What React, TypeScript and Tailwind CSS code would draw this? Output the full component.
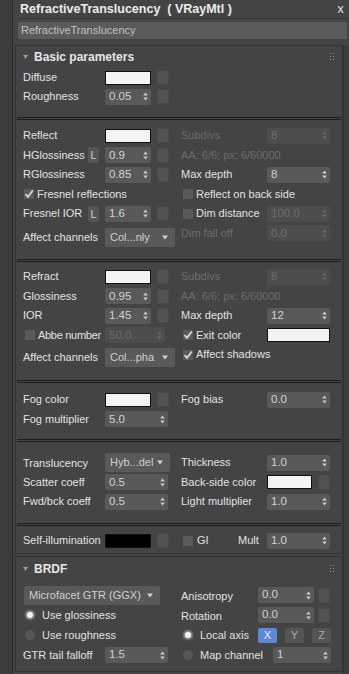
import React from "react";

const LBL = "text-[11px] leading-none text-[#e2e2e2] whitespace-nowrap";
const DIM = "text-[11px] leading-none text-[#6c6c6c] whitespace-nowrap";

function Arrows({ dim = false }: { dim?: boolean }) {
  return (
    <svg width="5" height="9" viewBox="0 0 5 9" className="shrink-0">
      <path d="M2.5 0.5L4.8 3.4H0.2Z M0.2 5.6H4.8L2.5 8.5Z" fill={dim ? "#686868" : "#cccccc"} />
    </svg>
  );
}

function Spinner({ value, w, dim = false }: { value: string; w: string; dim?: boolean }) {
  return (
    <div
      className={`${w} h-[16px] shrink-0 rounded-[2px] flex items-center justify-between pl-[4px] pr-[3px] text-[11.5px] leading-none whitespace-nowrap ${
        dim ? "bg-[#4d4d4d] text-[#6e6e6e]" : "bg-[#595959] text-[#d2d2d2]"
      }`}
    >
      <span>{value}</span>
      <Arrows dim={dim} />
    </div>
  );
}

function Tri() {
  return (
    <svg width="6" height="5" viewBox="0 0 6 5" className="shrink-0">
      <path d="M0 0.5H6L3 4.5Z" fill="#d0d0d0" />
    </svg>
  );
}

function Dropdown({ value, w }: { value: string; w: string }) {
  return (
    <div className={`${w} h-[19px] shrink-0 rounded-[2px] bg-[#595959] flex items-center justify-between pl-[5px] pr-[7px] text-[11px] leading-none text-[#cfcfcf] whitespace-nowrap`}>
      <span>{value}</span>
      <Tri />
    </div>
  );
}

function Swatch({ w, black = false }: { w: string; black?: boolean }) {
  return <div className={`${w} h-[14px] shrink-0 border border-[#111] ${black ? "bg-black" : "bg-[#f3f3f3]"}`} />;
}

function Sq() {
  return <div className="w-[12px] h-[15px] shrink-0 rounded-[2px] bg-[#525252] border border-[#4a4a4a]" />;
}

function LBtn() {
  return (
    <div className="w-[11px] h-[16px] shrink-0 rounded-[2px] bg-[#555] flex items-center justify-center text-[10.5px] leading-none text-[#cfcfcf]">
      L
    </div>
  );
}

function Check({ on = false }: { on?: boolean }) {
  return (
    <div className="w-[10px] h-[10px] shrink-0 bg-[#5a5a5a] flex items-center justify-center">
      {on && (
        <svg width="10" height="10" viewBox="0 0 10 10">
          <path d="M1.5 5.2L4 7.8L8.8 1.5" stroke="#d8d8d8" strokeWidth="1.8" fill="none" />
        </svg>
      )}
    </div>
  );
}

function Radio({ on = false }: { on?: boolean }) {
  return (
    <div className="w-[10px] h-[10px] shrink-0 rounded-full bg-[#575757] flex items-center justify-center">
      {on && <div className="w-[6px] h-[6px] rounded-full bg-[#f2f2f2] shadow-[0_0_3px_1px_rgba(255,255,255,0.5)]" />}
    </div>
  );
}

function Grip() {
  return (
    <svg width="5" height="8" viewBox="0 0 5 8" className="shrink-0">
      {[0, 3, 6].map((y) => (
        <g key={y}>
          <rect x="0" y={y} width="1" height="1" fill="#8a8a8a" />
          <rect x="3" y={y} width="1" height="1" fill="#8a8a8a" />
        </g>
      ))}
    </svg>
  );
}

function Sep() {
  return <div className="h-[3px] mx-[1px] border-y border-[#1c1c1c]" />;
}

function Header({ title }: { title: string }) {
  return (
    <div className="flex items-center pl-[7px] pr-[7px] h-full">
      <svg width="5" height="4" viewBox="0 0 5 4" className="shrink-0">
        <path d="M0 0H5L2.5 4Z" fill="#9a9a9a" />
      </svg>
      <span className="ml-[6px] text-[12px] font-bold leading-none text-[#e6e6e6]">{title}</span>
      <div className="flex-1" />
      <Grip />
    </div>
  );
}

function LRow({ children, h = "h-[19.5px]" }: { children: React.ReactNode; h?: string }) {
  return <div className={`${h} flex items-center`}>{children}</div>;
}
function LLabel({ children }: { children: React.ReactNode }) {
  return <div className="w-[82px] shrink-0 flex items-center">{children}</div>;
}
function RLabel({ children }: { children: React.ReactNode }) {
  return <div className="w-[86px] shrink-0 flex items-center">{children}</div>;
}

export default function App() {
  return (
    <div className="w-[349px] h-[674px] overflow-hidden bg-[#444444] flex font-['Liberation_Sans',Arial,sans-serif]">
      <div className="w-[13px] h-full bg-[#3c3c3c] border-r border-[#2a2a2a] shrink-0" />
      <div className="flex-1 flex flex-col">
        <div className="h-[19px] flex items-center pl-[7px] pr-[5px] border-b border-[#3a3a3a]">
          <span className="text-[12.5px] font-bold leading-none text-[#ececec] whitespace-pre">RefractiveTranslucency  ( VRayMtl )</span>
          <div className="flex-1" />
          <span className="text-[12px] font-bold leading-none text-[#c8c8c8] [text-shadow:0_0_1px_#111]">x</span>
        </div>
        <div className="mt-[3px] ml-[5px] mr-[2px] h-[17px] bg-[#5b5b5b] flex items-center pl-[3px] text-[11px] leading-none text-[#c0c0c0]">
          RefractiveTranslucency
        </div>
        <div className="mt-[6px] flex flex-1">
          <div className="ml-[2px] w-[328px] shrink-0 flex flex-col">
            {/* Basic parameters */}
            <div className="border border-[#333] flex flex-col">
              <div className="h-[21px]">
                <Header title="Basic parameters" />
              </div>
              <div className="h-[50px] pt-[1px] pl-[7px] flex flex-col">
                <LRow h="h-[19px]">
                  <LLabel><span className={LBL}>Diffuse</span></LLabel>
                  <Swatch w="w-[46px]" />
                  <div className="w-[6px]" />
                  <Sq />
                </LRow>
                <LRow h="h-[19px]">
                  <LLabel><span className={LBL}>Roughness</span></LLabel>
                  <Spinner value="0.05" w="w-[46px]" />
                  <div className="w-[6px]" />
                  <Sq />
                </LRow>
              </div>
              <Sep />
              <div className="h-[139px] pt-[6px] pl-[7px] flex">
                <div className="w-[158px] shrink-0 flex flex-col">
                  <LRow>
                    <LLabel><span className={LBL}>Reflect</span></LLabel>
                    <Swatch w="w-[46px]" />
                    <div className="w-[6px]" />
                    <Sq />
                  </LRow>
                  <LRow>
                    <div className="w-[82px] shrink-0 flex items-center justify-between pr-[6px]">
                      <span className={LBL}>HGlossiness</span>
                      <LBtn />
                    </div>
                    <Spinner value="0.9" w="w-[46px]" />
                    <div className="w-[6px]" />
                    <Sq />
                  </LRow>
                  <LRow>
                    <LLabel><span className={LBL}>RGlossiness</span></LLabel>
                    <Spinner value="0.85" w="w-[46px]" />
                    <div className="w-[6px]" />
                    <Sq />
                  </LRow>
                  <LRow>
                    <div className="ml-[1px]"><Check on /></div>
                    <span className={`${LBL} ml-[3px]`}>Fresnel reflections</span>
                  </LRow>
                  <LRow>
                    <div className="w-[82px] shrink-0 flex items-center justify-between pr-[6px]">
                      <span className={LBL}>Fresnel IOR</span>
                      <LBtn />
                    </div>
                    <Spinner value="1.6" w="w-[46px]" />
                    <div className="w-[6px]" />
                    <Sq />
                  </LRow>
                  <LRow h="h-[23px] mt-[2px]">
                    <LLabel><span className={LBL}>Affect channels</span></LLabel>
                    <Dropdown value="Col...nly" w="w-[70px]" />
                  </LRow>
                </div>
                <div className="w-[149px] shrink-0 flex flex-col">
                  <LRow>
                    <RLabel><span className={DIM}>Subdivs</span></RLabel>
                    <Spinner value="8" w="w-[63px]" dim />
                  </LRow>
                  <LRow>
                    <span className={DIM}>AA: 6/6; px: 6/60000</span>
                  </LRow>
                  <LRow>
                    <RLabel><span className={LBL}>Max depth</span></RLabel>
                    <Spinner value="8" w="w-[63px]" />
                  </LRow>
                  <LRow>
                    <div className="ml-[2px]"><Check /></div>
                    <span className={`${LBL} ml-[3px]`}>Reflect on back side</span>
                  </LRow>
                  <LRow>
                    <RLabel>
                      <div className="ml-[2px]"><Check /></div>
                      <span className={`${LBL} ml-[3px]`}>Dim distance</span>
                    </RLabel>
                    <Spinner value="100.0" w="w-[63px]" dim />
                  </LRow>
                  <LRow>
                    <RLabel><span className={DIM}>Dim fall off</span></RLabel>
                    <Spinner value="0.0" w="w-[63px]" dim />
                  </LRow>
                </div>
              </div>
              <Sep />
              <div className="h-[118px] pt-[5px] pl-[7px] flex">
                <div className="w-[158px] shrink-0 flex flex-col">
                  <LRow>
                    <LLabel><span className={LBL}>Refract</span></LLabel>
                    <Swatch w="w-[46px]" />
                    <div className="w-[6px]" />
                    <Sq />
                  </LRow>
                  <LRow>
                    <LLabel><span className={LBL}>Glossiness</span></LLabel>
                    <Spinner value="0.95" w="w-[46px]" />
                    <div className="w-[6px]" />
                    <Sq />
                  </LRow>
                  <LRow>
                    <LLabel><span className={LBL}>IOR</span></LLabel>
                    <Spinner value="1.45" w="w-[46px]" />
                    <div className="w-[6px]" />
                    <Sq />
                  </LRow>
                  <LRow>
                    <LLabel>
                      <div className="ml-[2px]"><Check /></div>
                      <span className={`${LBL} ml-[3px] tracking-[-0.3px]`}>Abbe number</span>
                    </LLabel>
                    <Spinner value="50.0" w="w-[60px]" dim />
                  </LRow>
                  <LRow h="h-[23px] mt-[1px]">
                    <LLabel><span className={LBL}>Affect channels</span></LLabel>
                    <Dropdown value="Col...pha" w="w-[70px]" />
                  </LRow>
                </div>
                <div className="w-[149px] shrink-0 flex flex-col">
                  <LRow>
                    <RLabel><span className={DIM}>Subdivs</span></RLabel>
                    <Spinner value="8" w="w-[63px]" dim />
                  </LRow>
                  <LRow>
                    <span className={DIM}>AA: 6/6; px: 6/60000</span>
                  </LRow>
                  <LRow>
                    <RLabel><span className={LBL}>Max depth</span></RLabel>
                    <Spinner value="12" w="w-[63px]" />
                  </LRow>
                  <LRow>
                    <RLabel>
                      <div className="ml-[2px]"><Check on /></div>
                      <span className={`${LBL} ml-[3px]`}>Exit color</span>
                    </RLabel>
                    <Swatch w="w-[63px]" />
                  </LRow>
                  <LRow>
                    <div className="ml-[2px]"><Check on /></div>
                    <span className={`${LBL} ml-[3px]`}>Affect shadows</span>
                  </LRow>
                </div>
              </div>
              <Sep />
              <div className="h-[56px] pt-[7px] pl-[7px] flex">
                <div className="w-[158px] shrink-0 flex flex-col">
                  <LRow>
                    <LLabel><span className={LBL}>Fog color</span></LLabel>
                    <Swatch w="w-[46px]" />
                    <div className="w-[6px]" />
                    <Sq />
                  </LRow>
                  <LRow>
                    <LLabel><span className={LBL}>Fog multiplier</span></LLabel>
                    <Spinner value="5.0" w="w-[63px]" />
                  </LRow>
                </div>
                <div className="w-[149px] shrink-0 flex flex-col">
                  <LRow>
                    <RLabel><span className={LBL}>Fog bias</span></RLabel>
                    <Spinner value="0.0" w="w-[63px]" />
                  </LRow>
                </div>
              </div>
              <Sep />
              <div className="h-[81px] pt-[11px] pl-[7px] flex">
                <div className="w-[158px] shrink-0 flex flex-col">
                  <LRow>
                    <LLabel><span className={`${LBL} mt-[2px]`}>Translucency</span></LLabel>
                    <Dropdown value="Hyb...del" w="w-[65px]" />
                  </LRow>
                  <LRow>
                    <LLabel><span className={LBL}>Scatter coeff</span></LLabel>
                    <Spinner value="0.5" w="w-[63px]" />
                  </LRow>
                  <LRow>
                    <LLabel><span className={LBL}>Fwd/bck coeff</span></LLabel>
                    <Spinner value="0.5" w="w-[63px]" />
                  </LRow>
                </div>
                <div className="w-[149px] shrink-0 flex flex-col">
                  <LRow>
                    <RLabel><span className={LBL}>Thickness</span></RLabel>
                    <Spinner value="1.0" w="w-[63px]" />
                  </LRow>
                  <LRow>
                    <RLabel><span className={LBL}>Back-side color</span></RLabel>
                    <Swatch w="w-[45px]" />
                    <div className="w-[6px]" />
                    <Sq />
                  </LRow>
                  <LRow>
                    <RLabel><span className={LBL}>Light multiplier</span></RLabel>
                    <Spinner value="1.0" w="w-[63px]" />
                  </LRow>
                </div>
              </div>
              <Sep />
              <div className="h-[27px] pt-[5px] pl-[7px] flex">
                <div className="w-[158px] shrink-0 flex flex-col">
                  <LRow>
                    <LLabel><span className={LBL}>Self-illumination</span></LLabel>
                    <Swatch w="w-[46px]" black />
                    <div className="w-[6px]" />
                    <Sq />
                  </LRow>
                </div>
                <div className="w-[149px] shrink-0 flex flex-col">
                  <LRow>
                    <div className="w-[57px] shrink-0 flex items-center">
                      <div className="ml-[2px]"><Check /></div>
                      <span className={`${LBL} ml-[4px]`}>GI</span>
                    </div>
                    <div className="w-[29px] shrink-0 flex items-center">
                      <span className={LBL}>Mult</span>
                    </div>
                    <Spinner value="1.0" w="w-[63px]" />
                  </LRow>
                </div>
              </div>
            </div>

            {/* BRDF */}
            <div className="mt-[2px] border border-[#333] flex flex-col">
              <div className="h-[24px]">
                <Header title="BRDF" />
              </div>
              <div className="pt-[4px] pb-[6px] pl-[7px] flex">
                <div className="w-[158px] shrink-0 flex flex-col">
                  <LRow h="h-[20px]">
                    <div className="ml-[1px]">
                      <Dropdown value="Microfacet GTR (GGX)" w="w-[136px]" />
                    </div>
                  </LRow>
                  <LRow h="h-[20px]">
                    <div className="ml-[2px]"><Radio on /></div>
                    <span className={`${LBL} ml-[7px]`}>Use glossiness</span>
                  </LRow>
                  <LRow h="h-[20px]">
                    <div className="ml-[2px]"><Radio /></div>
                    <span className={`${LBL} ml-[7px]`}>Use roughness</span>
                  </LRow>
                  <LRow h="h-[20px]">
                    <LLabel><span className={LBL}>GTR tail falloff</span></LLabel>
                    <Spinner value="1.5" w="w-[63px]" />
                  </LRow>
                </div>
                <div className="w-[150px] shrink-0 flex flex-col">
                  <LRow h="h-[20px]">
                    <div className="w-[77px] shrink-0"><span className={LBL}>Anisotropy</span></div>
                    <Spinner value="0.0" w="w-[56px]" />
                    <div className="w-[4px]" />
                    <Sq />
                  </LRow>
                  <LRow h="h-[20px]">
                    <div className="w-[77px] shrink-0"><span className={LBL}>Rotation</span></div>
                    <Spinner value="0.0" w="w-[56px]" />
                    <div className="w-[4px]" />
                    <Sq />
                  </LRow>
                  <LRow h="h-[20px]">
                    <div className="w-[77px] shrink-0 flex items-center">
                      <div className="ml-[2px]"><Radio on /></div>
                      <span className={`${LBL} ml-[7px]`}>Local axis</span>
                    </div>
                    <div className="w-[19px] h-[15px] rounded-[2px] bg-[#5a8ad6] flex items-center justify-center text-[11px] leading-none text-[#e8eef8]">X</div>
                    <div className="w-[8px]" />
                    <div className="w-[19px] h-[15px] rounded-[2px] bg-[#555] flex items-center justify-center text-[11px] leading-none text-[#a8a8a8]">Y</div>
                    <div className="w-[8px]" />
                    <div className="w-[19px] h-[15px] rounded-[2px] bg-[#555] flex items-center justify-center text-[11px] leading-none text-[#a8a8a8]">Z</div>
                  </LRow>
                  <LRow h="h-[20px]">
                    <div className="w-[92px] shrink-0 flex items-center">
                      <div className="ml-[2px]"><Radio /></div>
                      <span className={`${LBL} ml-[7px]`}>Map channel</span>
                    </div>
                    <Spinner value="1" w="w-[58px]" />
                  </LRow>
                </div>
              </div>
            </div>
          </div>
          <div className="flex-1 bg-[#3e3e3e] border-l border-[#343434]" />
        </div>
      </div>
    </div>
  );
}
